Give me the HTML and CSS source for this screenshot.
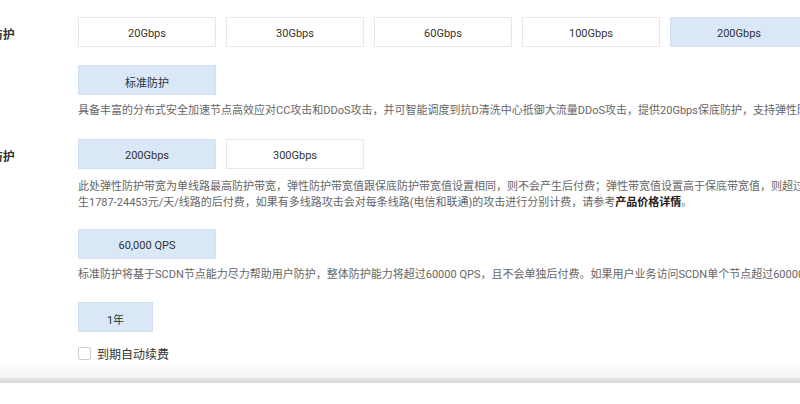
FILE: index.html
```html
<!DOCTYPE html>
<html lang="zh">
<head>
<meta charset="utf-8">
<link rel="stylesheet" href="styles.css">
</head>
<body>
<div class="page">
  <div class="form">
    <div class="field">
      <div class="label">DDoS保底防护</div>
      <div class="ctrl">
        <div class="opts">
          <div class="opt">20Gbps</div>
          <div class="opt">30Gbps</div>
          <div class="opt">60Gbps</div>
          <div class="opt">100Gbps</div>
          <div class="opt on">200Gbps</div>
        </div>
      </div>
    </div>
    <div class="field gap18">
      <div class="label">CC防护</div>
      <div class="ctrl">
        <div class="opts">
          <div class="opt on">标准防护</div>
        </div>
        <div class="desc">具备丰富的分布式安全加速节点高效应对CC攻击和DDoS攻击，并可智能调度到抗D清洗中心抵御大流量DDoS攻击，提供20Gbps保底防护，支持弹性防护能力。</div>
      </div>
    </div>
    <div class="field gap20">
      <div class="label">DDoS弹性防护</div>
      <div class="ctrl">
        <div class="opts">
          <div class="opt on">200Gbps</div>
          <div class="opt">300Gbps</div>
        </div>
        <div class="desc desc2">此处弹性防护带宽为单线路最高防护带宽，弹性防护带宽值跟保底防护带宽值设置相同，则不会产生后付费；弹性带宽值设置高于保底带宽值，则超过保底带宽部分的攻击流量将会产<br>生1787-24453元/天/线路的后付费，如果有多线路攻击会对每条线路(电信和联通)的攻击进行分别计费，请参考<b class="link">产品价格详情</b>。</div>
      </div>
    </div>
    <div class="field gap18">
      <div class="label">CC防护QPS</div>
      <div class="ctrl">
        <div class="opts">
          <div class="opt on">60,000 QPS</div>
        </div>
        <div class="desc">标准防护将基于SCDN节点能力尽力帮助用户防护，整体防护能力将超过60000 QPS，且不会单独后付费。如果用户业务访问SCDN单个节点超过60000 QPS，将会被限制访问。</div>
      </div>
    </div>
    <div class="field gap19">
      <div class="label">购买时长</div>
      <div class="ctrl">
        <div class="opts">
          <div class="opt short on">1年</div>
        </div>
        <label class="check"><span class="box"></span><span class="check-text">到期自动续费</span></label>
      </div>
    </div>
  </div>
  <div class="shade"></div>
  <div class="edge"></div>
  <div class="below"></div>
</div>
</body>
</html>
```

FILE: styles.css
```css
html, body {
  margin: 0;
  padding: 0;
  background: #fff;
}
body {
  width: 800px;
  height: 404px;
  overflow: hidden;
  font-family: "Roboto", "Noto Sans CJK SC", sans-serif;
  color: #333;
}
.page {
  height: 404px;
  display: flex;
  flex-direction: column;
}
.form {
  margin-left: -63px;
  padding-top: 17px;
}
.field {
  display: flex;
  align-items: flex-start;
}
.gap18 { margin-top: 18px; }
.gap19 { margin-top: 19px; }
.gap20 { margin-top: 20px; }
.label {
  width: 141px;
  height: 30px;
  box-sizing: border-box;
  flex: none;
  padding-top: 3px;
  font-size: 12px;
  font-weight: bold;
  line-height: 30px;
  white-space: nowrap;
  color: #333;
}
.ctrl {
  flex: none;
}
.opts {
  display: flex;
  gap: 10px;
}
.opt {
  flex: none;
  width: 138px;
  height: 30px;
  box-sizing: border-box;
  padding-top: 3px;
  border: 1px solid #e8e8e8;
  background: #fff;
  display: flex;
  align-items: center;
  justify-content: center;
  font-size: 11px;
  color: #333;
}
.opt.on {
  background: #d9e7f6;
  border-color: #d2e1f2;
}
.opt.short {
  width: 75px;
}
.desc {
  margin-top: 8px;
  font-size: 11px;
  line-height: 16px;
  color: #666;
  white-space: nowrap;
}
.desc2 {
  margin-top: 10px;
}
.link {
  color: #222;
  font-weight: bold;
}
.check {
  margin-top: 14px;
  display: flex;
  align-items: center;
  height: 14px;
}
.box {
  width: 13px;
  height: 13px;
  box-sizing: border-box;
  border: 1px solid #cdcdcd;
  border-radius: 2px;
  background: #fff;
}
.check-text {
  margin-left: 6px;
  font-size: 12px;
  color: #333;
}
.shade {
  margin-top: auto;
  height: 16px;
  background: linear-gradient(#ffffff, #f3f3f3);
}
.edge {
  height: 5px;
  background: linear-gradient(#e6e6e6, #d9d9d9);
}
.below {
  height: 21px;
  background: #fff;
}
```
